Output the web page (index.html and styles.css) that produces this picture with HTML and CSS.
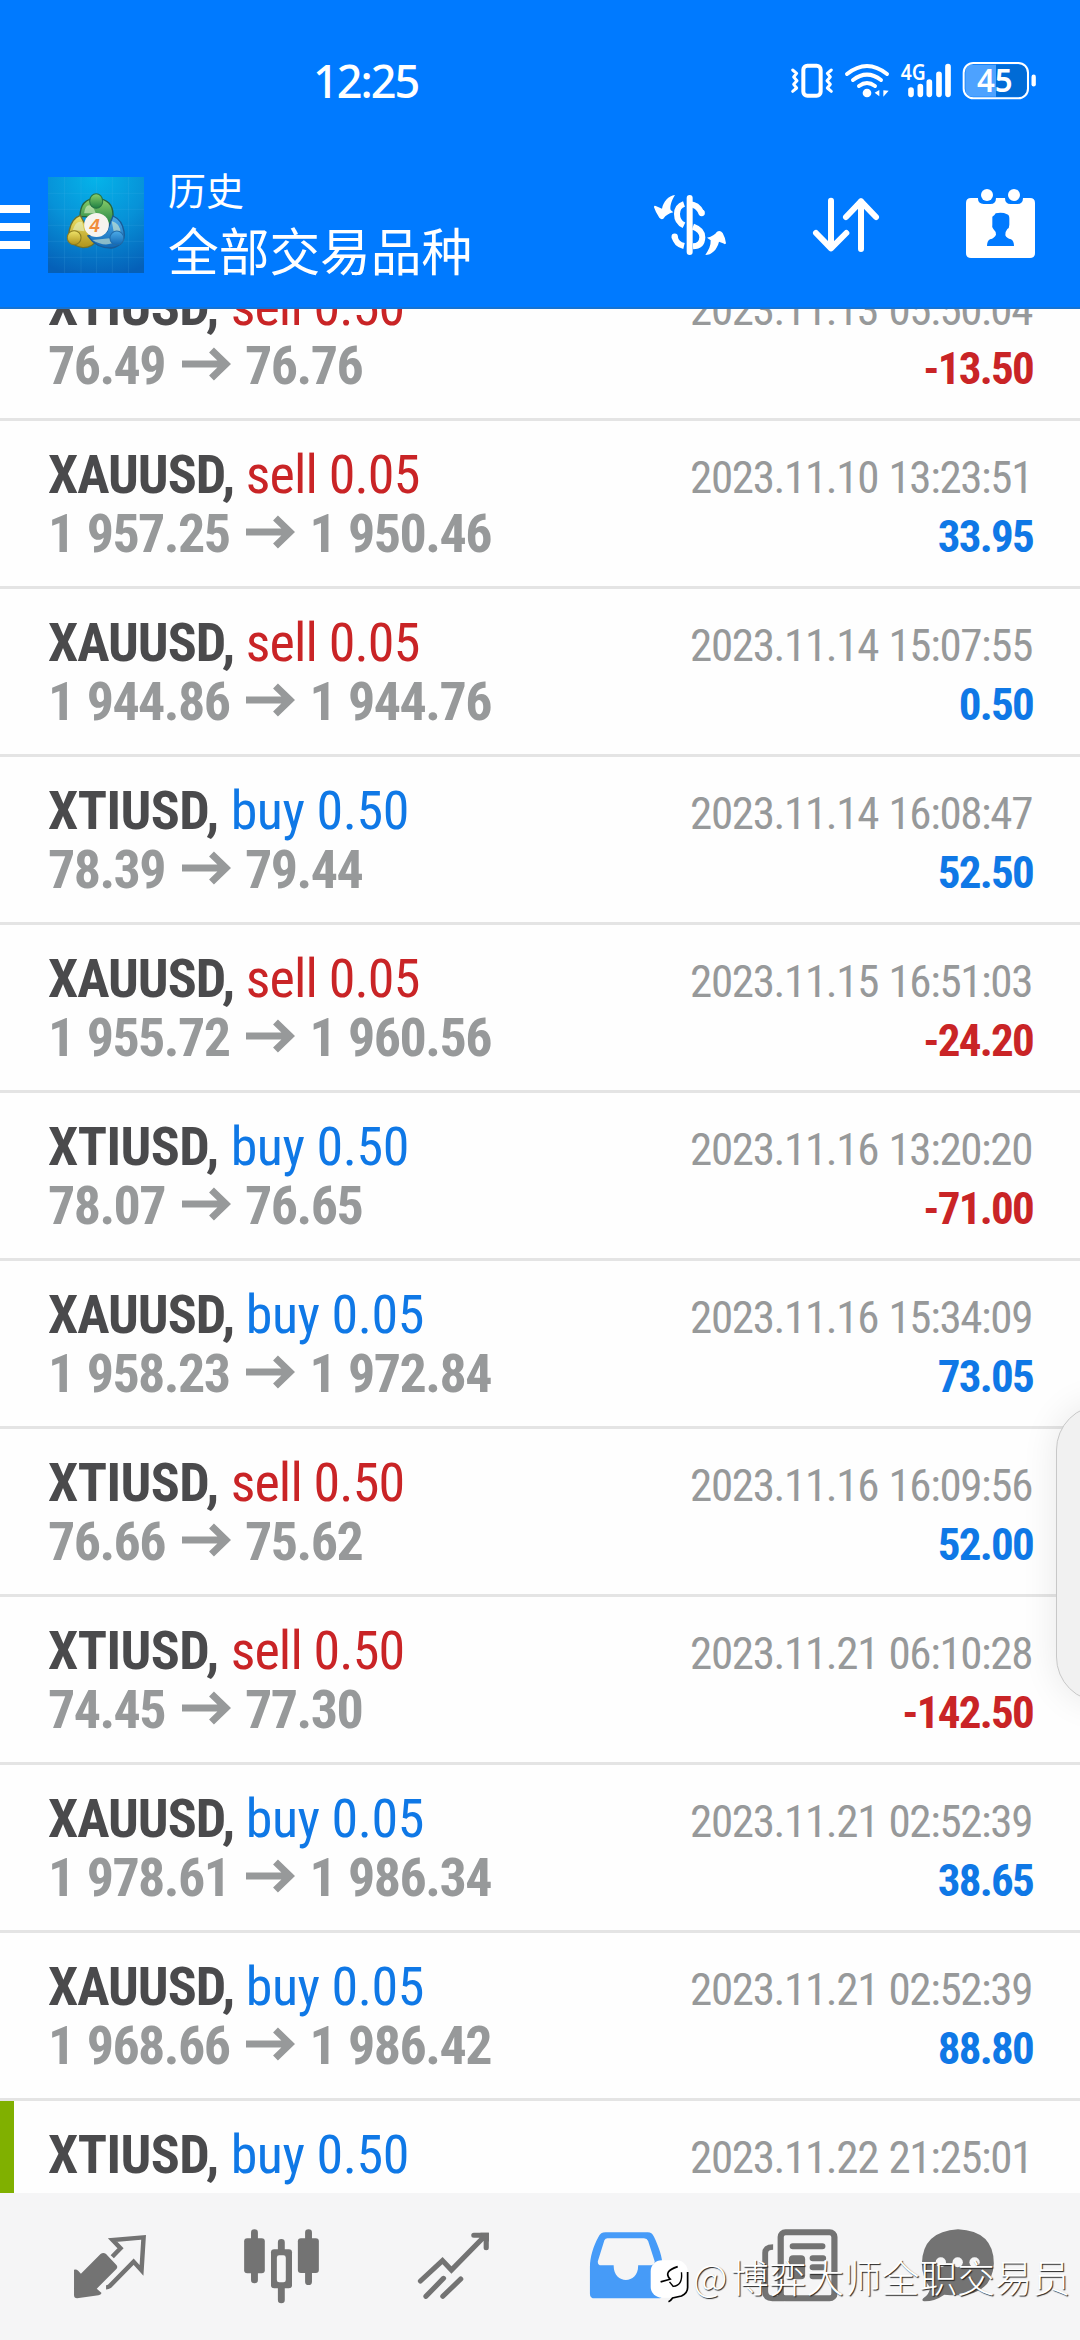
FILE: index.html
```html
<!DOCTYPE html>
<html lang="zh-CN">
<head>
<meta charset="utf-8">
<title>历史</title>
<link rel="stylesheet" href="styles.css">
</head>
<body>
<svg class="defs" width="0" height="0">
  <symbol id="arrow" viewBox="0 0 49 34"><path d="M0 17H45M29.500 3L44 17L29.500 31" fill="none" stroke="currentColor" stroke-width="7"/></symbol>
</svg>
<div class="app">
  <header class="header">
    <div class="status">
      <div class="clock">12:25</div>
      <svg class="status-icons" viewBox="0 0 960 240" fill="none" stroke="#fff" stroke-linecap="round" stroke-linejoin="round">
        <rect x="130" y="77" width="52" height="90" rx="12" stroke-width="12"/>
        <path d="M98 90l12 10l-9 11l10 11l-10 11l9 11l-12 10M214 90l-12 10l9 11l-10 11l10 11l-9 11l12 10" stroke-width="9"/>
        <path d="M261 102Q321 54 381 102M279 120Q321 88 363 120M297 138Q321 120 345 138" stroke-width="12"/>
        <circle cx="321" cy="159" r="13" fill="#fff" stroke="none"/>
        <path d="M358 150v19l-14-11zM370 151v19l16-18z" fill="#fff" stroke="none"/>
        <path d="M453 150v13M481 140v23M508 126v37M537 103v60M564 80v83" stroke-width="17"/>
        <text class="net" x="422" y="121" textLength="75" lengthAdjust="spacingAndGlyphs">4G</text>
        <path d="M636 74H708V170H636Q616 170 616 145V98Q616 74 636 74z" fill="#fff" fill-opacity=".3" stroke="none"/>
        <path d="M708 74H780Q800 74 800 98V145Q800 170 780 170H708z" fill="#006bd6" stroke="none"/>
        <rect x="611" y="69" width="193" height="106" rx="29" stroke-width="6"/>
        <path d="M821 110v23" stroke-width="13"/>
        <text class="batt" x="651" y="156" textLength="107" lengthAdjust="spacingAndGlyphs">45</text>
      </svg>
    </div>
    <div class="bar">
      <div class="menu"><i></i><i></i><i></i></div>
      <svg class="logo" viewBox="139 81 279 288" preserveAspectRatio="none">
        <defs>
          <radialGradient id="bg" cx=".5" cy="0" r="1.050"><stop offset="0" stop-color="#05b4ea"/><stop offset=".5" stop-color="#0792d8"/><stop offset="1" stop-color="#0560b8"/></radialGradient>
          <linearGradient id="gr" x2="0" y2="1"><stop stop-color="#8bd06b"/><stop offset="1" stop-color="#1d7f42"/></linearGradient>
          <linearGradient id="ye" x2="0" y2="1"><stop stop-color="#f0e46a"/><stop offset="1" stop-color="#b0931a"/></linearGradient>
          <linearGradient id="bl" x2="0" y2="1"><stop stop-color="#4cabe8"/><stop offset="1" stop-color="#1168b5"/></linearGradient>
        </defs>
        <rect x="139" y="81" width="279" height="288" fill="url(#bg)"/>
        <path d="M139 130H418M139 178H418M139 226H418M139 274H418M139 322H418M187 81V369M235 81V369M280 81V369M326 81V369M373 81V369" stroke="#6fc6ef" stroke-opacity=".18" stroke-width="2"/>
        <path d="M232 200Q232 145 280 145Q328 148 328 195Q328 225 305 228L250 200z" fill="url(#gr)" stroke="#28643b" stroke-width="4"/>
        <path d="M233 196Q208 205 201 240Q192 285 240 293Q268 294 280 270L246 222z" fill="url(#ye)" stroke="#6c7130" stroke-width="4"/>
        <path d="M328 198Q355 210 360 245Q365 285 325 294Q280 296 255 258L310 245z" fill="url(#bl)" stroke="#1a5b97" stroke-width="4"/>
        <path d="M244 190Q248 155 270 170L278 190zM211 240Q220 210 238 216L245 244zM324 213Q350 220 350 250L330 245zM268 270Q300 290 325 280L318 265z" fill="#e6f5d2" fill-opacity=".55"/>
        <circle cx="280" cy="225" r="36" fill="#f7f4ef"/>
        <ellipse cx="279" cy="153" rx="19" ry="22" fill="url(#gr)" stroke="#267344" stroke-width="3"/>
        <ellipse cx="215" cy="263" rx="20" ry="21" fill="url(#ye)" stroke="#8b7c20" stroke-width="3"/>
        <ellipse cx="339" cy="264" rx="20" ry="21" fill="url(#bl)" stroke="#226daa" stroke-width="3"/>
        <text class="four" x="260" y="247">4</text>
      </svg>
      <div class="titles"><div class="sub">历史</div><div class="title">全部交易品种</div></div>
      <div class="actions">
        <svg viewBox="-24 0 468 477" fill="none" stroke="#fff" stroke-linecap="round">
          <path d="M209 144V306" stroke-width="18"/>
          <path d="M245 189Q232 163 209 163M192 162Q171 169 171 192Q171 216 192 226M219 230Q247 240 247 262Q246 288 219 289M192 288Q168 282 164 260" stroke-width="18" stroke-linecap="butt"/>
          <path d="M245 189h.1M164 260h.1" stroke-width="19"/>
          <path d="M165 135C155 151 149 169 152 180L160 187C145 191 138 196 130 206Q124 210 118 203Q106 185 102 172Q102 165 109 169L126 176C130 155 145 137 165 135zM256 315C266 301 273 286 272 271L261 263C277 259 285 253 291 245Q301 240 308 249Q316 263 318 280Q316 285 309 280L297 275C291 300 274 315 256 315z" fill="#fff" stroke="none"/>
        </svg>
        <svg viewBox="444 0 468 477" fill="none" stroke="#fff" stroke-width="18" stroke-linecap="round" stroke-linejoin="round"><path d="M633 152V295M588 249L633 295L679 249M723 297V154M678 201L723 154L768 201"/></svg>
        <svg viewBox="912 0 468 477" fill="#fff">
          <path d="M1053 144H1074Q1073 162 1091 162H1111Q1128 162 1128 144H1155Q1155 162 1172 162H1192Q1209 162 1209 144H1230Q1245 144 1245 159V309Q1245 324 1230 324H1053Q1038 324 1038 309V159Q1038 144 1053 144z"/>
          <circle cx="1101" cy="135" r="18"/><circle cx="1182" cy="135" r="18"/>
          <path d="M1117 200Q1123 198 1127 190Q1148 186 1161 193Q1168 195 1168 205V224Q1168 234 1162 237Q1155 245 1156 256Q1160 265 1173 268Q1182 273 1182 288H1101Q1101 273 1110 268Q1124 264 1128 254Q1128 244 1120 237Q1115 230 1117 222z" fill="#007aff"/>
        </svg>
      </div>
    </div>
  </header>

  <main class="list">
    <div class="rows">
    <div class="row"><div class="line"><span class="sym">XTIUSD, <b class="sell">sell 0.50</b></span><span class="date">2023.11.13 05:50:04</span></div><div class="line"><span class="price">76.49<svg><use href="#arrow"/></svg>76.76</span><span class="pl neg">-13.50</span></div></div>
    <div class="row"><div class="line"><span class="sym gold">XAUUSD, <b class="sell">sell 0.05</b></span><span class="date">2023.11.10 13:23:51</span></div><div class="line"><span class="price">1 957.25<svg><use href="#arrow"/></svg>1 950.46</span><span class="pl">33.95</span></div></div>
    <div class="row"><div class="line"><span class="sym gold">XAUUSD, <b class="sell">sell 0.05</b></span><span class="date">2023.11.14 15:07:55</span></div><div class="line"><span class="price">1 944.86<svg><use href="#arrow"/></svg>1 944.76</span><span class="pl">0.50</span></div></div>
    <div class="row"><div class="line"><span class="sym">XTIUSD, <b>buy 0.50</b></span><span class="date">2023.11.14 16:08:47</span></div><div class="line"><span class="price">78.39<svg><use href="#arrow"/></svg>79.44</span><span class="pl">52.50</span></div></div>
    <div class="row"><div class="line"><span class="sym gold">XAUUSD, <b class="sell">sell 0.05</b></span><span class="date">2023.11.15 16:51:03</span></div><div class="line"><span class="price">1 955.72<svg><use href="#arrow"/></svg>1 960.56</span><span class="pl neg">-24.20</span></div></div>
    <div class="row"><div class="line"><span class="sym">XTIUSD, <b>buy 0.50</b></span><span class="date">2023.11.16 13:20:20</span></div><div class="line"><span class="price">78.07<svg><use href="#arrow"/></svg>76.65</span><span class="pl neg">-71.00</span></div></div>
    <div class="row"><div class="line"><span class="sym gold">XAUUSD, <b>buy 0.05</b></span><span class="date">2023.11.16 15:34:09</span></div><div class="line"><span class="price">1 958.23<svg><use href="#arrow"/></svg>1 972.84</span><span class="pl">73.05</span></div></div>
    <div class="row"><div class="line"><span class="sym">XTIUSD, <b class="sell">sell 0.50</b></span><span class="date">2023.11.16 16:09:56</span></div><div class="line"><span class="price">76.66<svg><use href="#arrow"/></svg>75.62</span><span class="pl">52.00</span></div></div>
    <div class="row"><div class="line"><span class="sym">XTIUSD, <b class="sell">sell 0.50</b></span><span class="date">2023.11.21 06:10:28</span></div><div class="line"><span class="price">74.45<svg><use href="#arrow"/></svg>77.30</span><span class="pl neg">-142.50</span></div></div>
    <div class="row"><div class="line"><span class="sym gold">XAUUSD, <b>buy 0.05</b></span><span class="date">2023.11.21 02:52:39</span></div><div class="line"><span class="price">1 978.61<svg><use href="#arrow"/></svg>1 986.34</span><span class="pl">38.65</span></div></div>
    <div class="row"><div class="line"><span class="sym gold">XAUUSD, <b>buy 0.05</b></span><span class="date">2023.11.21 02:52:39</span></div><div class="line"><span class="price">1 968.66<svg><use href="#arrow"/></svg>1 986.42</span><span class="pl">88.80</span></div></div>
    <div class="row marked"><div class="line"><span class="sym">XTIUSD, <b>buy 0.50</b></span><span class="date">2023.11.22 21:25:01</span></div><div class="line"><span class="price">76.89<svg><use href="#arrow"/></svg>76.65</span></div></div>
    </div>
  </main>

  <nav class="nav">
    <svg viewBox="69.700 338 499.500 441" preserveAspectRatio="none">
      <path d="M292 521Q300 515 308 521L338 554Q343 560 338 566L281 625L295 638Q293 643 286 645L224 654Q215 654 215 645V568Q222 566 227 571L235 580z"/>
      <path d="M326 529L350 504L327 479L417 471L411 570L388 544L318 618Q314 621 308 621" fill="none" stroke-width="13"/>
    </svg>
    <svg viewBox="569.200 338 499.500 441" preserveAspectRatio="none">
      <path d="M739 457V599M896 457V604M817 486V510M817 620V659" stroke-width="20" stroke-linecap="round"/>
      <rect x="709" y="474" width="60" height="105" rx="9"/><rect x="865" y="474" width="61" height="104" rx="9"/>
      <rect x="787" y="507" width="61" height="117" rx="9"/><rect x="804" y="525" width="26" height="81" rx="7" fill="#f5f5f6"/>
    </svg>
    <svg viewBox="1068.700 338 499.500 441" preserveAspectRatio="none">
      <path d="M1221 602L1285 541L1311 569L1408 467M1376 465H1412V502M1237 648L1288 594M1286 648L1338 596" fill="none" stroke-width="15" stroke-linecap="round"/>
      <path d="M1395 457H1420V485z"/>
    </svg>
    <svg class="on" viewBox="0 338 499.500 441" preserveAspectRatio="none">
      <path fill-rule="evenodd" d="M190 456H313Q325 456 331 469C345 500 356 530 356 560V640Q356 654 343 654H159Q145 654 145 640V560C145 530 155 497 170 469Q176 456 190 456zM196 474Q190 474 187 480L168 543Q167 555 178 555H214C212 614 287 614 285 555H323Q334 553 333 543L314 482Q311 474 302 474z"/>
    </svg>
    <svg viewBox="499.500 338 499.500 441" preserveAspectRatio="none">
      <rect x="699" y="456" width="156" height="198" rx="14" fill="none" stroke-width="18"/>
      <path d="M677 500Q654 500 654 518V633Q654 654 675 654H710" fill="none" stroke-width="17"/>
      <path d="M734 498H820M792 534H822M792 561H822M792 588H822" stroke-width="18" stroke-linecap="round"/>
      <rect x="723" y="525" width="47" height="72" rx="12"/>
    </svg>
    <svg viewBox="999 338 499.500 441" preserveAspectRatio="none">
      <path d="M1214 447Q1318 452 1318 550Q1313 642 1214 645Q1190 645 1174 643Q1145 664 1115 663Q1107 661 1113 654Q1131 641 1133 622Q1109 590 1109 550Q1111 453 1214 447z"/>
      <g fill="#f5f5f6"><circle cx="1164" cy="546" r="15"/><circle cx="1213" cy="546" r="15"/><circle cx="1262" cy="546" r="15"/></g>
    </svg>
  </nav>

  <div class="edge-panel"></div>
  <div class="watermark">
    <svg viewBox="320 538 114 136" preserveAspectRatio="none">
      <rect x="322" y="542" width="108" height="113" rx="32" fill="#fff"/>
      <path d="M374 667Q381 664 386 656L412 650Q430 641 430 624V577" fill="none" stroke="#000" stroke-width="5"/>
      <path d="M351 607L379 599Q357 575 401 561" fill="none" stroke="#000" stroke-width="5"/>
      <path d="M377 607L388 621Q416 618 412 578" fill="none" stroke="#000" stroke-width="4"/>
    </svg>
    <span class="at">@</span><span>博弈大师全职交易员</span>
  </div>
</div>
</body>
</html>
```

FILE: styles.css
```css
* { box-sizing: border-box; }
body { margin: 0; }
svg { display: block; }
.defs { position: absolute; }
.app {
  position: relative;
  width: 1080px;
  height: 2340px;
  overflow: hidden;
  display: flex;
  flex-direction: column;
  background: #fefefe;
  font-family: "Roboto Condensed", Roboto, "Noto Sans CJK SC", sans-serif;
  font-stretch: 75%;
}
.header {
  flex: none;
  height: 309px;
  background: #007aff;
  border-bottom: 2px solid #1673d2;
  color: #fff;
}
.status { height: 150px; display: flex; justify-content: space-between; padding: 40px 0 0 313px; }
.clock { font: 500 45px/80px "Noto Sans", sans-serif; letter-spacing: -2px; padding-top: 1px; }
.status-icons { width: 320px; height: 80px; }
.net { font: 600 65px "Noto Sans", sans-serif; fill: #fff; stroke: none; }
.batt { font: 600 95px "Noto Sans", sans-serif; fill: #fff; stroke: none; }
.bar { display: flex; height: 159px; }
.menu { width: 30px; margin: 55px 18px 0 0; display: flex; flex-direction: column; gap: 10px; }
.menu i { height: 8px; background: #fff; }
.logo { width: 96px; height: 96px; margin-top: 27px; }
.four { font: 700 54px "Liberation Sans", sans-serif; font-style: italic; fill: #f08d3c; }
.titles { flex: 1; padding: 12px 0 0 24px; font-family: "Noto Sans CJK SC", sans-serif; font-stretch: normal; }
.sub { font-size: 38px; line-height: 54px; }
.title { font-size: 50.700px; line-height: 66px; white-space: nowrap; }
.actions { display: flex; width: 468px; }
.actions svg { width: 156px; height: 159px; }

.list { height: 1884px; overflow: hidden; }
.rows { margin-top: -56px; }
.row { height: 168px; padding: 24px 48px 0; border-bottom: 3px solid #e4e4e4; }
.marked { border-left: 14px solid #80b000; padding-left: 34px; }
.line { display: flex; justify-content: space-between; align-items: baseline; height: 59px; line-height: 59px; white-space: pre; }
.sym { font-size: 54px; font-weight: 700; color: #4a4a4c; letter-spacing: -.55px; }
.gold { letter-spacing: -1px; }
.sym b { font-weight: 400; color: #0f78e6; letter-spacing: -.45px; }
.sym .sell { color: #c92426; letter-spacing: -.85px; }
.date { font-size: 45px; color: #97999a; letter-spacing: -1.350px; word-spacing: 1.500px; }
.price { font-size: 54px; font-weight: 700; color: #97999a; letter-spacing: -1.550px; word-spacing: 2px; }
.price svg { display: inline-block; width: 49px; height: 34px; margin: 0 14px 0 17px; vertical-align: 3px; }
.pl { font-size: 45px; font-weight: 700; color: #0f78e6; letter-spacing: -1.750px; margin-right: -1px; }
.neg { color: #c92426; }

.nav { flex: none; height: 147px; padding: 0 24px; display: flex; background: #f5f5f6; }
.nav svg { width: 172px; height: 147px; fill: #737373; stroke: #737373; stroke-width: 0; }
.nav .on { fill: #469bf8; }

.edge-panel {
  position: absolute;
  left: 1056px;
  top: 1405px;
  width: 120px;
  height: 297px;
  border: 1px solid #c8c8c8;
  border-radius: 45px;
  background: #f1f1f1;
  box-shadow: 0 0 36px rgba(0, 0, 0, .09);
}
.watermark {
  position: absolute;
  left: 650px;
  top: 2252px;
  display: flex;
  font: 300 37.700px/48px "Noto Sans CJK SC", sans-serif;
  color: #fff;
  text-shadow: 1px 1px 1px #222;
  white-space: nowrap;
}
.watermark svg { width: 39px; height: 45px; margin: 7px 4px 0 0; }
.at { width: 38px; }
```
